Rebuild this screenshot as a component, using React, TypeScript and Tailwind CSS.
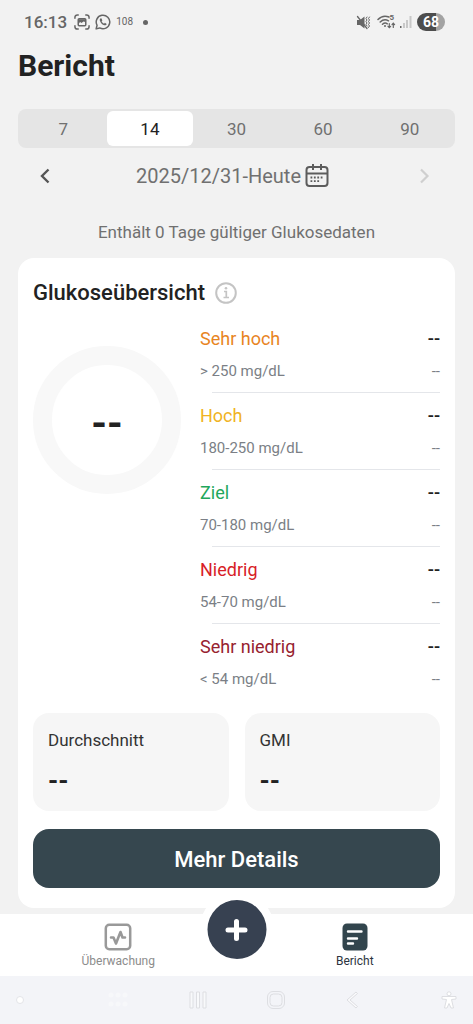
import React, { useState } from "react";

type Range = { label: string; bounds: string; color: string };

const PERIODS = [7, 14, 30, 60, 90];

const RANGES: Range[] = [
  { label: "Sehr hoch", bounds: "> 250 mg/dL", color: "text-[#e8851f]" },
  { label: "Hoch", bounds: "180-250 mg/dL", color: "text-[#f0b323]" },
  { label: "Ziel", bounds: "70-180 mg/dL", color: "text-[#1fa75c]" },
  { label: "Niedrig", bounds: "54-70 mg/dL", color: "text-[#d81e28]" },
  { label: "Sehr niedrig", bounds: "< 54 mg/dL", color: "text-[#97222f]" },
];

function StatusBar() {
  return (
    <div className="flex h-11 items-center justify-between pl-6 pr-7 text-[#666666]">
      <div className="flex items-center gap-[5px]">
        <span className="mr-[2px] text-[17px] leading-5 font-medium">16:13</span>
        <svg width="16" height="16" viewBox="0 0 17 17" fill="none" stroke="currentColor" strokeWidth="1.6" strokeLinecap="round">
          <path d="M1 4.5V3.5A2.5 2.5 0 0 1 3.5 1H4.5M12.5 1H13.5A2.5 2.5 0 0 1 16 3.5V4.5M16 12.5V13.5A2.5 2.5 0 0 1 13.5 16H12.5M4.5 16H3.5A2.5 2.5 0 0 1 1 13.5V12.5" />
          <rect x="4.5" y="5" width="8" height="7.5" rx="1" />
          <path d="M5 5.5H12V8.5L10 8L8 9.5L6.5 8.5L5 10Z" fill="currentColor" stroke="none" />
        </svg>
        <svg width="16" height="16" viewBox="0 0 17 17" fill="none" stroke="currentColor" strokeWidth="1.6" strokeLinejoin="round">
          <path d="M1.2 15.8L2.2 12A7.2 7.2 0 1 1 5 14.8Z" />
          <path d="M6.1 4.5C5.2 5 4.8 6 5.2 7.2C6 9.6 7.8 11.4 10 12C11.2 12.2 12.2 11.6 12.4 10.5L10.5 9.4L9.6 10.3C8.4 9.8 7.5 8.9 7 7.8L7.8 6.9L7 4.7Z" fill="currentColor" stroke="none" />
        </svg>
        <span className="text-[10px] leading-3">108</span>
        <span className="ml-[5px] size-[5px] rounded-full bg-[#666666]" />
      </div>
      <div className="flex items-center gap-1">
        <svg width="17" height="15" viewBox="0 0 17 15" fill="none" stroke="currentColor" strokeWidth="1.3" strokeLinecap="round">
          <path d="M1 5H4L8.5 1.5V13.5L4 10H1Z" fill="currentColor" stroke="none" />
          <path d="M1.5 1.5L11 13.5" />
          <path d="M11 2L10 3.5L11 5L10 6.5L11 8L10 9.5L11 11M13.500 2L12.500 3.500L13.500 5L12.500 6.500L13.500 8L12.500 9.500L13.500 11L12.500 12.500" strokeWidth="1" />
        </svg>
        <div className="relative">
          <svg width="19" height="16" viewBox="0 0 19 16" fill="none" stroke="currentColor" strokeWidth="1.5" strokeLinecap="round">
            <path d="M1 5.5C4 2.3 8 1.5 12 3M3.2 8C5.5 5.8 9 5.3 11.5 6.8M5.500 10.300C7 9 9 8.900 10.300 9.800" />
            <circle cx="8" cy="12" r="1" fill="currentColor" stroke="none" />
            <path d="M12.3 9.5V13.5M11 12.3L12.3 13.7L13.6 12.3M16.3 13.5V9.3M15 10.6L16.3 9.2L17.6 10.6" strokeWidth="1.2" />
          </svg>
          <span className="absolute right-[2px] top-0 text-[8px] leading-[8px] font-bold">5</span>
        </div>
        <svg width="13" height="14" viewBox="0 0 13 14" fill="#c8c8c8">
          <rect x="0" y="11" width="1.5" height="2" fill="#666666" />
          <rect x="3" y="8" width="2" height="5" />
          <rect x="6" y="5" width="2" height="8" />
          <rect x="9.500" y="1" width="2" height="12" />
        </svg>
        <span className="flex h-[18px] w-7 items-center justify-center rounded-full bg-linear-to-r from-[#4d4d4d] from-68% to-[#a3a3a3] to-68% text-[14px] leading-4 font-bold text-white">
          68
        </span>
      </div>
    </div>
  );
}

function PeriodTabs({ value, onChange }: { value: number; onChange: (days: number) => void }) {
  return (
    <div className="grid grid-cols-5 rounded-lg bg-[#e5e5e5] p-[2px]">
      {PERIODS.map((days) => (
        <button
          key={days}
          type="button"
          onClick={() => onChange(days)}
          aria-pressed={days === value}
          className={`h-[35px] rounded-md text-[17px] leading-5 ${
            days === value ? "bg-white text-[#222222]" : "text-[#707070]"
          }`}
        >
          {days}
        </button>
      ))}
    </div>
  );
}

function DateRow() {
  return (
    <div className="flex h-14 items-center justify-between pl-5 pr-6">
      <button type="button" aria-label="Zurück" className="text-[#555555]">
        <svg width="14" height="18" viewBox="0 0 14 18" fill="none" stroke="currentColor" strokeWidth="2.4">
          <path d="M10.5 2.5L4 9L10.5 15.5" />
        </svg>
      </button>
      <button type="button" className="mr-1 flex items-center gap-1 text-[20px] leading-6 text-[#707070]">
        2025/12/31-Heute
        <svg width="24" height="24" viewBox="0 0 24 24" fill="none" stroke="#5c5c5c" strokeWidth="2">
          <rect x="1.5" y="3" width="21" height="19" rx="3" />
          <path d="M1.5 9.5H22.5M8 0V6M16 0V6" />
          <path d="M5.5 13.5H18.5M5.5 17.2H15.5" strokeWidth="1.8" strokeDasharray="1.8 1.6" />
        </svg>
      </button>
      <button type="button" aria-label="Weiter" disabled className="text-[#cfcfcf]">
        <svg width="14" height="18" viewBox="0 0 14 18" fill="none" stroke="currentColor" strokeWidth="2.2">
          <path d="M4 2.5L10.5 9L4 15.5" />
        </svg>
      </button>
    </div>
  );
}

function RangeRow({ label, bounds, color }: Range) {
  return (
    <li className="group">
      <div className="flex h-[76px] flex-col justify-center gap-2 pt-[2px]">
        <div className="flex items-center justify-between text-[18px] leading-6">
          <span className={color}>{label}</span>
          <span className="font-medium text-[#222222]">--</span>
        </div>
        <div className="flex items-center justify-between text-[15px] leading-6 text-[#7b7f86]">
          <span>{bounds}</span>
          <span>--</span>
        </div>
      </div>
      <div className="ml-3 h-px bg-[#e4e6ea] group-last:hidden" />
    </li>
  );
}

function StatTile({ label }: { label: string }) {
  return (
    <div className="flex-1 rounded-2xl bg-[#f6f6f6] px-[15px] pt-[15px] pb-3">
      <p className="text-[17px] leading-6 text-[#333333]">{label}</p>
      <p className="mt-3 text-[26px] leading-[35px] font-bold text-[#222222]">--</p>
    </div>
  );
}

function BottomNav() {
  return (
    <nav className="relative grid h-[62px] grid-cols-2 bg-white">
      <a href="#monitor" className="flex flex-col items-center pt-[9px] text-[12px] leading-4 text-[#8c8c8c]">
        <svg className="mb-[2px]" width="28" height="28" viewBox="0 0 28 28" fill="none" stroke="#999999" strokeWidth="2.5" strokeLinecap="round" strokeLinejoin="round">
          <rect x="1.8" y="1.8" width="24.4" height="24.4" rx="3.5" />
          <path d="M7 14.500H9.500L12 20.5L16.5 9L18.5 14.5H21" strokeWidth="2.6" />
        </svg>
        Überwachung
      </a>
      <a href="#report" className="flex flex-col items-center pt-[9px] text-[12px] leading-4 text-[#2c3440]">
        <svg className="mb-[2px]" width="28" height="28" viewBox="0 0 28 28">
          <rect x="1.5" y="0.5" width="25" height="27" rx="4.5" fill="#32454d" />
          <path d="M7 8.5H20.5M7 15.5H16M7 20.5H12" stroke="white" strokeWidth="2.4" strokeLinecap="round" />
        </svg>
        Bericht
      </a>
      <button
        type="button"
        aria-label="Hinzufügen"
        className="absolute -top-[22px] left-1/2 flex size-[75px] -translate-x-1/2 items-center justify-center rounded-full border-8 border-white bg-[#374151]"
      >
        <svg width="24" height="24" viewBox="0 0 24 24" stroke="white" strokeWidth="5" strokeLinecap="round">
          <path d="M12 3.5V20.5M3.5 12H20.5" />
        </svg>
      </button>
    </nav>
  );
}

function SystemBar() {
  return (
    <div className="flex h-12 items-center justify-between bg-[#f3f4f8] px-4">
      <span className="size-2 rounded-full border border-[#e3e4e8] bg-white" />
      <div className="flex items-center gap-[60px]">
        <svg width="22" height="18" viewBox="0 0 22 18" fill="#f7f8fa">
          <circle cx="4" cy="4" r="2.5" />
          <circle cx="11" cy="4" r="2.5" />
          <circle cx="18" cy="4" r="2.5" />
          <circle cx="4" cy="13" r="2.5" />
          <circle cx="11" cy="13" r="2.5" />
          <circle cx="18" cy="13" r="2.5" />
        </svg>
        <svg width="18" height="18" viewBox="0 0 18 18" fill="#f8f9fb" stroke="#dddee2">
          <path d="M1 1H4V17H1ZM7.5 1H10.5V17H7.5ZM14 1H17V17H14Z" />
        </svg>
        <svg width="18" height="18" viewBox="0 0 18 18" fill="none" stroke="#dddee2">
          <rect x="0.5" y="0.5" width="17" height="17" rx="5.5" />
          <rect x="3" y="3" width="12" height="12" rx="3.5" />
        </svg>
        <svg width="14" height="18" viewBox="0 0 14 18" fill="#fafafc" stroke="#dddee2">
          <path d="M11 1L2 9L11 17L12.5 15.5L5 9L12.5 2.5Z" />
        </svg>
      </div>
      <svg width="16" height="18" viewBox="0 0 16 18" fill="white" stroke="#dddee2">
        <circle cx="8" cy="2.8" r="2" />
        <path d="M1 5.5H15V8L10.5 8.5L12.5 17H10L8 12.5L6 17H3.5L5.5 8.5L1 8Z" />
      </svg>
    </div>
  );
}

export default function App() {
  const [period, setPeriod] = useState(14);

  return (
    <div className="flex min-h-screen flex-col bg-[#f2f2f2] font-[Roboto,sans-serif]">
      <StatusBar />
      <main className="flex-1 px-[18px] pb-[6px]">
        <h1 className="mb-[23px] pt-[2px] text-[30px] leading-[40px] font-bold text-[#222222]">Bericht</h1>
        <PeriodTabs value={period} onChange={setPeriod} />
        <DateRow />
        <p className="pt-4 pb-[14px] text-center text-[17px] leading-6 text-[#707070]">
          Enthält 0 Tage gültiger Glukosedaten
        </p>

        <section className="rounded-2xl bg-white px-[15px] pt-5 pb-5">
          <div className="flex items-center gap-[10px]">
            <h2 className="text-[22px] leading-[30px] font-medium text-[#222222]">Glukoseübersicht</h2>
            <button type="button" aria-label="Info">
              <svg width="22" height="22" viewBox="0 0 22 22" fill="none" stroke="#c4c4c4" strokeWidth="2">
                <circle cx="11" cy="11" r="9.8" />
                <path d="M9 9.5H11.3V15.5M8.5 15.5H14" strokeWidth="1.7" />
                <circle cx="11" cy="6.3" r="1.3" fill="#c4c4c4" stroke="none" />
              </svg>
            </button>
          </div>

          <div className="mt-2 flex gap-[19px]">
            <div className="mt-[30px] flex size-[148px] shrink-0 items-center justify-center rounded-full border-[19px] border-[#f8f8f8] pt-2 text-[40px] leading-[48px] font-bold text-[#222222]">
              --
            </div>
            <ul className="flex-1">
              {RANGES.map((range) => (
                <RangeRow key={range.label} {...range} />
              ))}
            </ul>
          </div>

          <div className="mt-[13px] flex gap-4">
            <StatTile label="Durchschnitt" />
            <StatTile label="GMI" />
          </div>

          <button
            type="button"
            className="mt-[18px] h-[59px] w-full rounded-2xl bg-[#36474f] pt-[2px] text-[22px] leading-7 font-medium text-white"
          >
            Mehr Details
          </button>
        </section>
      </main>
      <BottomNav />
      <SystemBar />
    </div>
  );
}
